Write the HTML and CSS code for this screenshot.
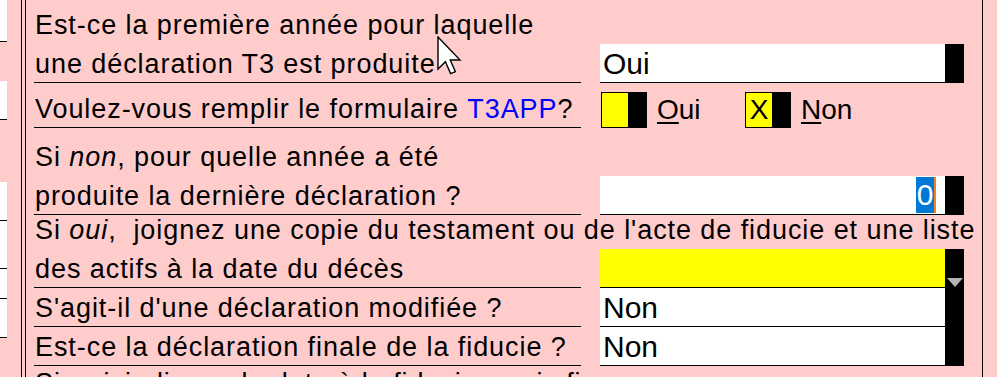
FILE: index.html
```html
<!DOCTYPE html>
<html lang="fr">
<head>
<meta charset="utf-8">
<title>Déclaration T3</title>
<link rel="stylesheet" href="styles.css">
</head>
<body>
<div class="screen">
  <div class="side">
    <div class="scell s1"></div>
    <div class="scell s2"></div>
    <div class="scell s3"></div>
    <div class="scell s4"></div>
    <div class="scell s5"></div>
    <div class="scell s6"></div>
  </div>
  <div class="rule"></div>
  <div class="panel">
    <div class="sheet">
      <div class="lbl">Est-ce la première année pour laquelle</div>
      <div class="fld"></div>

      <div class="lbl ul">une déclaration T3 est produite</div>
      <div class="fld">
        <div class="input"><div class="box">Oui</div><div class="bar"></div></div>
      </div>

      <div class="lbl ul">Voulez-vous remplir le formulaire&nbsp;<span class="link">T3APP</span>?</div>
      <div class="fld choices">
        <div class="check"><div class="yel"></div><div class="blk"></div></div>
        <div class="opt"><u>O</u>ui</div>
        <div class="check"><div class="yel">X</div><div class="blk"></div></div>
        <div class="opt"><u>N</u>on</div>
      </div>

      <div class="lbl">Si&nbsp;<i>non</i>, pour quelle année a été</div>
      <div class="fld"></div>

      <div class="lbl ul">produite la dernière déclaration ?</div>
      <div class="fld">
        <div class="input"><div class="box num"><span class="sel">0</span></div><div class="bar"></div></div>
      </div>

      <div class="lbl wide">Si&nbsp;<i>oui</i>,&nbsp; joignez une copie du testament ou de l'acte de fiducie et une liste</div>

      <div class="lbl ul">des actifs à la date du décès</div>
      <div class="fld">
        <div class="input"><div class="box yellow"></div><div class="bar"><span class="tri"></span></div></div>
      </div>

      <div class="lbl ul">S'agit-il d'une déclaration modifiée ?</div>
      <div class="fld">
        <div class="input"><div class="box">Non</div><div class="bar"></div></div>
      </div>

      <div class="lbl ul">Est-ce la déclaration finale de la fiducie ?</div>
      <div class="fld">
        <div class="input"><div class="box">Non</div><div class="bar"></div></div>
      </div>

      <div class="lbl wide top">Si&nbsp;<i>oui</i>, indiquez la date à la fiducie a pris fin</div>
    </div>
  </div>
  <div class="rest"></div>
  <svg class="cursor" width="26" height="40" viewBox="0 0 13 20">
    <path d="M0.5 0.5 L0.5 16.5 L4.2 12.9 L6.8 18.8 L9.2 17.8 L6.6 12 L11.5 12 Z" fill="#fff" stroke="#000" stroke-width="0.7" stroke-linejoin="miter"/>
  </svg>
</div>
</body>
</html>
```

FILE: styles.css
```css
* { box-sizing: border-box; }

html, body {
  margin: 0;
  padding: 0;
  background: #ffcccc;
}

.screen {
  position: relative;
  display: flex;
  width: 997px;
  height: 377px;
  overflow: hidden;
  background: #ffcccc;
  font-family: "Liberation Sans", Arial, sans-serif;
  color: #000;
}

/* left neighbouring panel */
.side {
  width: 21px;
  flex: none;
  display: flex;
  flex-direction: column;
}
.scell {
  width: 7px;
  background: #fff;
  border-bottom: 1px solid #000;
}
.s1 { height: 42px; }
.s2 { height: 39px; margin-top: 39px; }
.s3 { height: 39px; margin-top: 62px; }
.s4 { height: 48px; }
.s5 { height: 30px; }
.s6 { height: 39px; }

.rule {
  width: 5px;
  flex: none;
  border-left: 1px solid #000;
  border-right: 1px solid #000;
}

.panel {
  width: 957px;
  flex: none;
  border-right: 1px solid #000;
  padding-left: 8px;
}

.rest { flex: 1; }

.sheet {
  display: grid;
  grid-template-columns: 547px 364px;
  column-gap: 19px;
  grid-template-rows: 44px 39px 45px 48px 39px 34px 39px 39px 39px 44px;
}

.lbl {
  display: flex;
  align-items: flex-end;
  white-space: nowrap;
  font-size: 27px;
  line-height: 27px;
  letter-spacing: 0.93px;
  padding-bottom: 4px;
  padding-left: 1px;
  border-bottom: 1px solid transparent;
}
.lbl.ul { border-bottom-color: #000; }
.lbl.wide { grid-column: 1 / -1; overflow: visible; }
.lbl.top { align-items: flex-start; padding-top: 4px; }

.link { color: #0000ff; }

.fld {
  display: flex;
  align-items: stretch;
}

.input {
  display: flex;
  width: 100%;
}
.box {
  flex: 1;
  display: flex;
  align-items: flex-end;
  background: #fff;
  border-bottom: 1px solid #000;
  padding: 0 0 3px 3px;
  font-size: 30px;
  line-height: 30px;
}
.box.yellow { background: #ffff00; }
.box.num {
  justify-content: flex-end;
  align-items: center;
  padding: 0 11px 0 0;
}
.sel {
  display: block;
  width: 18px;
  height: 36px;
  line-height: 36px;
  text-align: center;
  background: #0078d7;
  color: #fff;
  box-shadow: 2px 0 0 #f58220;
}
.bar {
  width: 19px;
  flex: none;
  background: #000;
  display: flex;
  align-items: flex-end;
  justify-content: center;
}
.tri {
  width: 0;
  height: 0;
  border-left: 8px solid transparent;
  border-right: 8px solid transparent;
  border-top: 9px solid #b3b3b3;
  margin-bottom: 1px;
}

.choices {
  align-items: flex-end;
  font-size: 28px;
  line-height: 28px;
}
.check {
  width: 46px;
  height: 36px;
  margin-left: 1px;
  border: 1px solid #000;
  display: flex;
}
.check .yel {
  width: 26px;
  background: #ffff00;
  display: flex;
  align-items: flex-end;
  justify-content: center;
  padding-bottom: 3px;
}
.check .blk {
  flex: 1;
  background: #000;
}
.opt {
  padding-left: 10px;
  padding-bottom: 4px;
  width: 97px;
}
.opt u { text-underline-offset: 3px; }

.cursor {
  position: absolute;
  left: 437px;
  top: 36px;
}
```
